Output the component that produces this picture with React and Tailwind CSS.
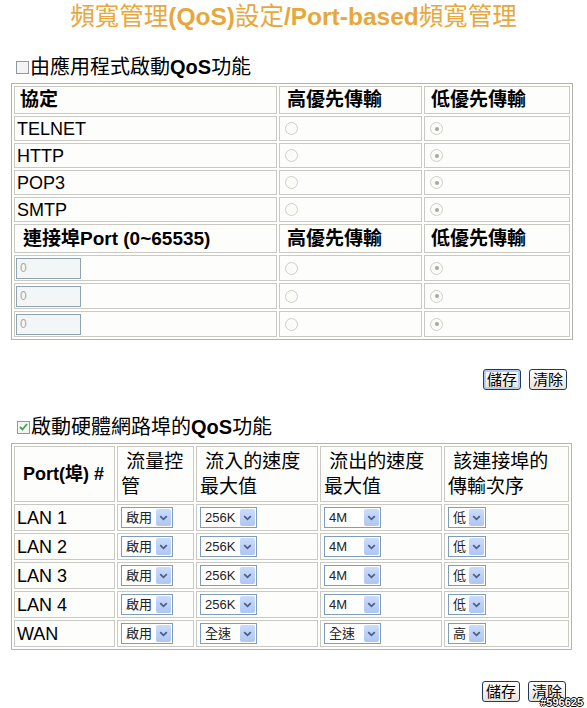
const font = { fontFamily: '"Liberation Sans", "Noto Sans CJK TC", sans-serif' };

const Radio = ({ checked }) => (
  <span className="inline-flex items-center justify-center w-[13px] h-[13px] rounded-full border border-[#cfcfc8] bg-[#fbfbf8] ml-[5px] align-middle">
    {checked && <span className="w-[4px] h-[4px] rounded-full bg-[#a8a8a0]" />}
  </span>
);

const Check = ({ checked }) => (
  <span className="inline-flex items-center justify-center w-[13px] h-[13px] border border-[#8b9aa6] bg-[#f4f5f2] mr-[1px]">
    {checked && (
      <svg width="9" height="8" viewBox="0 0 9 8">
        <path d="M1 4 L3.5 6.5 L8 1" stroke="#3fa64a" strokeWidth="1.8" fill="none" />
      </svg>
    )}
  </span>
);

const Sel = ({ w, label }) => (
  <div className={`flex items-center h-[21px] border border-[#7f9db9] bg-white ml-[3px] ${w}`}>
    <span className="flex-1 pl-[4px] text-[13px] leading-none text-[#222]">{label}</span>
    <span className="w-[15px] h-[17px] mr-[1px] rounded-[2px] bg-gradient-to-b from-[#cbdcfc] to-[#aec6f4] flex items-center justify-center">
      <svg width="9" height="6" viewBox="0 0 9 6">
        <path d="M1.2 1.2 L4.5 4.3 L7.8 1.2" stroke="#4c5f86" strokeWidth="1.8" fill="none" />
      </svg>
    </span>
  </div>
);

const Btn = ({ children, focus }) => (
  <button
    className={`h-[21px] px-[3px] rounded-[3px] border border-[#1f3b63] bg-gradient-to-b from-white to-[#e6e4da] text-[15px] leading-none text-black ${
      focus ? "shadow-[inset_0_0_0_2px_#b6cdf3]" : ""
    }`}
  >
    {children}
  </button>
);

const td = "border border-[#c9c9c1] bg-[#fdfdfb] p-0 align-middle";

const protocols = ["TELNET", "HTTP", "POP3", "SMTP"];
const ports = [
  { name: "LAN 1", inS: "256K", outS: "4M", pri: "低" },
  { name: "LAN 2", inS: "256K", outS: "4M", pri: "低" },
  { name: "LAN 3", inS: "256K", outS: "4M", pri: "低" },
  { name: "LAN 4", inS: "256K", outS: "4M", pri: "低" },
  { name: "WAN", inS: "全速", outS: "全速", pri: "高" },
];

export default function App() {
  return (
    <div className="relative w-[587px] h-[708px] overflow-hidden bg-white text-black" style={font}>
      <div className="mt-[3px] text-center text-[24.5px] leading-[28px] text-[#e6a83c]">
        <span>頻寬管理</span>
        <span className="font-bold">(QoS)</span>
        <span>設定</span>
        <span className="font-bold">/Port-based</span>
        <span>頻寬管理</span>
      </div>

      <div className="mt-[24px] pl-[16px] flex items-center text-[20px] leading-[24px]">
        <Check />
        <span>由應用程式啟動</span>
        <span className="font-bold">QoS</span>
        <span>功能</span>
      </div>

      <table className="mt-[4px] ml-[11px] w-[562px] border border-[#b4b4ac] border-separate border-spacing-[2px] text-[18px] leading-[20px]">
        <tbody>
          <tr className="h-[28px]">
            <td className={`${td} w-[263px] pl-[5px] font-bold text-[19px]`}>協定</td>
            <td className={`${td} w-[143px] pl-[7px] font-bold text-[19px]`}>高優先傳輸</td>
            <td className={`${td} pl-[6px] font-bold text-[19px]`}>低優先傳輸</td>
          </tr>
          {protocols.map((p) => (
            <tr key={p} className="h-[25px]">
              <td className={`${td} pl-[2px]`}>{p}</td>
              <td className={td}><div className="flex items-center"><Radio /></div></td>
              <td className={td}><div className="flex items-center"><Radio checked /></div></td>
            </tr>
          ))}
          <tr className="h-[29px]">
            <td className={`${td} pl-[8px] font-bold text-[19px]`}>連接埠Port (0~65535)</td>
            <td className={`${td} pl-[7px] font-bold text-[19px]`}>高優先傳輸</td>
            <td className={`${td} pl-[6px] font-bold text-[19px]`}>低優先傳輸</td>
          </tr>
          {[0, 1, 2].map((i) => (
            <tr key={i} className="h-[26px]">
              <td className={td}>
                <div className="ml-[1px] w-[65px] h-[21px] border border-[#8fa3b3] bg-[#f3f6f6] text-[12px] leading-[19px] pl-[3px] text-[#a9a9a9]">
                  0
                </div>
              </td>
              <td className={td}><div className="flex items-center"><Radio /></div></td>
              <td className={td}><div className="flex items-center"><Radio checked /></div></td>
            </tr>
          ))}
        </tbody>
      </table>

      <div className="mt-[29px] pr-[20px] flex justify-end gap-[8px]">
        <Btn focus>儲存</Btn>
        <Btn>清除</Btn>
      </div>

      <div className="mt-[26px] pl-[17px] flex items-center text-[20px] leading-[22px]">
        <Check checked />
        <span>啟動硬體網路埠的</span>
        <span className="font-bold">QoS</span>
        <span>功能</span>
      </div>

      <table className="mt-[5px] ml-[11px] w-[561px] border border-[#b4b4ac] border-separate border-spacing-[2px] text-[18px] leading-[20px]">
        <tbody>
          <tr className="h-[56px]">
            <td className={`${td} w-[101px] pl-[8px] font-bold`}>Port(埠) #</td>
            <td className={`${td} w-[77px] pl-[3px] text-[19px] leading-[25px]`}>
              &nbsp;流量控<br />管
            </td>
            <td className={`${td} w-[122px] pl-[3px] text-[19px] leading-[25px]`}>
              &nbsp;流入的速度<br />最大值
            </td>
            <td className={`${td} w-[122px] pl-[3px] text-[19px] leading-[25px]`}>
              &nbsp;流出的速度<br />最大值
            </td>
            <td className={`${td} pl-[3px] text-[19px] leading-[25px]`}>
              &nbsp;該連接埠的<br />傳輸次序
            </td>
          </tr>
          {ports.map((r) => (
            <tr key={r.name} className="h-[27px]">
              <td className={`${td} pl-[2px]`}>{r.name}</td>
              <td className={td}><Sel w="w-[52px]" label="啟用" /></td>
              <td className={td}><Sel w="w-[57px]" label={r.inS} /></td>
              <td className={td}><Sel w="w-[57px]" label={r.outS} /></td>
              <td className={td}><Sel w="w-[38px]" label={r.pri} /></td>
            </tr>
          ))}
        </tbody>
      </table>

      <div className="mt-[31px] pr-[21px] flex justify-end gap-[8px]">
        <Btn>儲存</Btn>
        <Btn>清除</Btn>
      </div>

      <div className="absolute right-[4px] bottom-[0px] text-[11px] font-bold leading-none text-white [text-shadow:1px_0_0_#000,-1px_0_0_#000,0_1px_0_#000,0_-1px_0_#000]">
        #596625
      </div>
    </div>
  );
}
